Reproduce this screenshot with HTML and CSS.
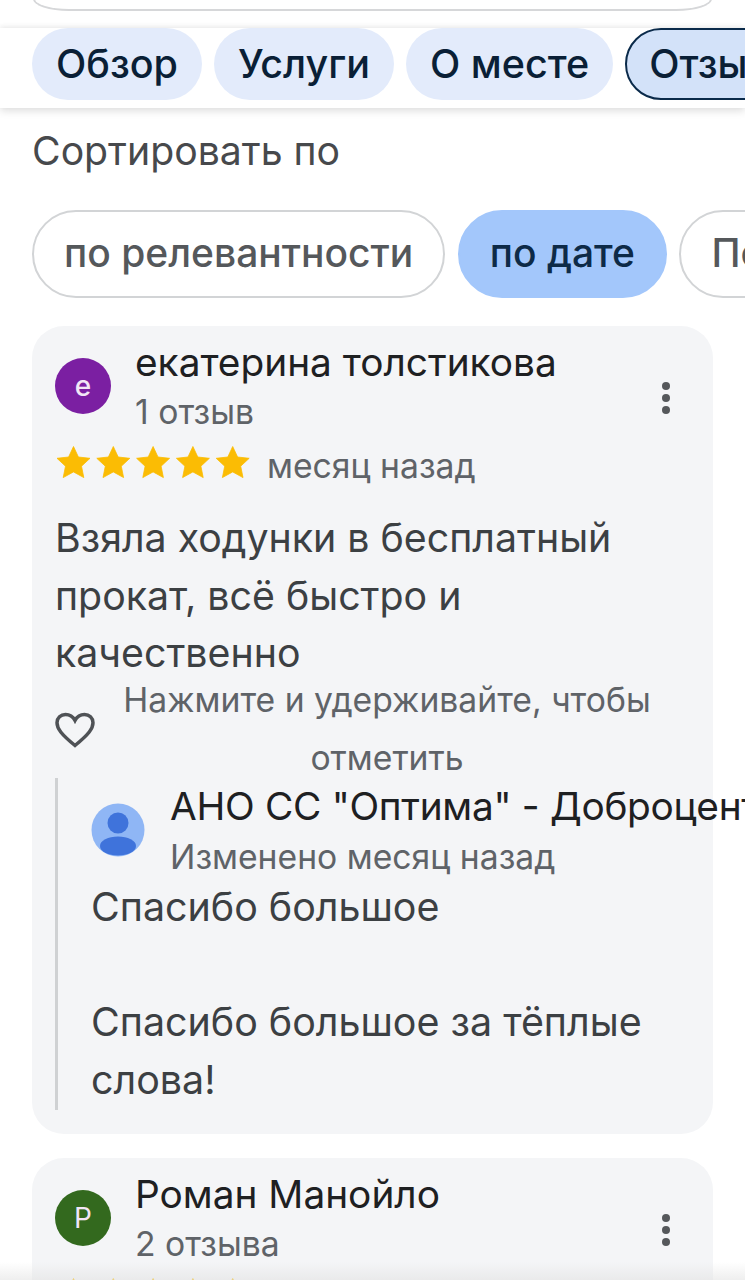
FILE: index.html
```html
<!DOCTYPE html>
<html lang="ru">
<head>
<meta charset="utf-8">
<title>Отзывы</title>
<link rel="stylesheet" href="styles.css">
</head>
<body>
<div class="page">
  <div class="search-area"><div class="search-box"></div></div>
  <nav class="tabs">
    <span class="tab">Обзор</span>
    <span class="tab">Услуги</span>
    <span class="tab">О месте</span>
    <span class="tab tab-active">Отзывы</span>
  </nav>
  <main class="content">
    <div class="sort-label">Сортировать по</div>
    <div class="sort-row">
      <span class="sort-chip">по релевантности</span>
      <span class="sort-chip sort-chip-active">по дате</span>
      <span class="sort-chip">Положительные</span>
    </div>
    <article class="card">
      <header class="head">
        <div class="avatar avatar-purple">е</div>
        <div class="who">
          <div class="name">екатерина толстикова</div>
          <div class="sub">1 отзыв</div>
        </div>
        <svg class="more" viewBox="0 0 12 44"><circle cx="6" cy="6" r="4"/><circle cx="6" cy="18" r="4"/><circle cx="6" cy="30" r="4"/></svg>
      </header>
      <div class="rating">
        <svg class="stars" viewBox="0 0 193 33">
          <path d="M16.500 .5l4.900 10.500 11.600 1.300-8.500 7.900 2.300 11.400-10.300-5.700-10.300 5.700 2.300-11.400-8.500-7.900 11.600-1.300z"/>
          <path d="M56.300 .5l4.900 10.500 11.600 1.300-8.500 7.900 2.300 11.400-10.300-5.700-10.300 5.700 2.300-11.400-8.500-7.900 11.600-1.300z"/>
          <path d="M96.100 .5l4.900 10.500 11.600 1.300-8.500 7.900 2.300 11.400-10.300-5.700-10.300 5.700 2.300-11.400-8.500-7.900 11.600-1.300z"/>
          <path d="M135.900 .5l4.900 10.500 11.600 1.300-8.500 7.900 2.300 11.400-10.300-5.700-10.300 5.700 2.300-11.400-8.500-7.900 11.600-1.300z"/>
          <path d="M175.700 .5l4.900 10.500 11.600 1.300-8.500 7.900 2.300 11.400-10.300-5.700-10.300 5.700 2.300-11.400-8.500-7.900 11.600-1.300z"/>
        </svg>
        <span class="date">месяц назад</span>
      </div>
      <p class="text">Взяла ходунки в бесплатный прокат, всё быстро и качественно</p>
      <div class="like-row">
        <svg class="heart" viewBox="0 0 40 36"><path d="M20 33.500 C6 22 2 16.500 2 10.800 C2 6 5.800 2.500 10.500 2.500 C14.500 2.500 18 4.700 20 8.500 C22 4.700 25.500 2.500 29.500 2.500 C34.200 2.500 38 6 38 10.800 C38 16.500 34 22 20 33.500 Z"/></svg>
        <div class="like-hint">Нажмите и удерживайте, чтобы отметить</div>
      </div>
      <section class="reply">
        <div class="reply-head">
          <svg class="owner" viewBox="0 0 54 54"><circle cx="27" cy="27" r="26.500" fill="#8fb6f5"/><circle cx="27" cy="20" r="10.500" fill="#3f73db"/><ellipse cx="27" cy="43" rx="18" ry="9.500" fill="#3f73db"/></svg>
          <div class="who">
            <div class="name owner-name">АНО СС "Оптима" - Доброцентр</div>
            <div class="sub owner-sub">Изменено месяц назад</div>
          </div>
        </div>
        <p class="reply-text">Спасибо большое<br><br>Спасибо большое за тёплые слова!</p>
      </section>
    </article>
    <article class="card">
      <header class="head">
        <div class="avatar avatar-green">Р</div>
        <div class="who">
          <div class="name">Роман Манойло</div>
          <div class="sub">2 отзыва</div>
        </div>
        <svg class="more" viewBox="0 0 12 44"><circle cx="6" cy="6" r="4"/><circle cx="6" cy="18" r="4"/><circle cx="6" cy="30" r="4"/></svg>
      </header>
      <div class="rating">
        <svg class="stars" viewBox="0 0 193 33">
          <path d="M16.500 .5l4.900 10.500 11.600 1.300-8.500 7.900 2.300 11.400-10.300-5.700-10.300 5.700 2.300-11.400-8.500-7.900 11.600-1.300z"/>
          <path d="M56.300 .5l4.900 10.500 11.600 1.300-8.500 7.900 2.300 11.400-10.300-5.700-10.300 5.700 2.300-11.400-8.500-7.900 11.600-1.300z"/>
          <path d="M96.100 .5l4.900 10.500 11.600 1.300-8.500 7.900 2.300 11.400-10.300-5.700-10.300 5.700 2.300-11.400-8.500-7.900 11.600-1.300z"/>
          <path d="M135.900 .5l4.900 10.500 11.600 1.300-8.500 7.900 2.300 11.400-10.300-5.700-10.300 5.700 2.300-11.400-8.500-7.900 11.600-1.300z"/>
          <path d="M175.700 .5l4.900 10.500 11.600 1.300-8.500 7.900 2.300 11.400-10.300-5.700-10.300 5.700 2.300-11.400-8.500-7.900 11.600-1.300z"/>
        </svg>
      </div>
    </article>
  </main>
  <div class="bottom-fade"></div>
</div>
</body>
</html>
```
FILE: styles.css
```css
* { box-sizing: border-box; }
html, body { margin: 0; padding: 0; background: #fff; }
body { font-family: Inter, "Noto Sans", sans-serif; }
.page { position: relative; width: 745px; height: 1280px; overflow: hidden; background: #fff; }

.search-area { height: 28px; padding: 0 33px 0 33px; overflow: hidden; }
.search-box { height: 12px; margin-top: -1px; border: 2px solid #d6d7d9; border-top: 0; border-radius: 0 0 36px 36px / 0 0 12px 12px; }

.tabs { position: relative; z-index: 2; display: flex; gap: 12px; height: 80px; padding: 0 0 8px 32px; background: #fff; box-shadow: 0 3px 8px rgba(0,0,0,.13), 0 -2px 5px rgba(0,0,0,.05); overflow: hidden; }
.tab { flex: none; display: flex; align-items: center; height: 72px; padding: 0 24px 1px; border-radius: 36px; background: #e3ebfb; color: #0a1f36; font-size: 39.500px; font-weight: 500; }
.tab-active { background: #d3e2f9; border: 2px solid #0a2a4a; padding: 0 22px 1px; }

.content { padding: 0 32px; }
.sort-label { margin-top: 20px; height: 48px; line-height: 46px; font-size: 39.200px; color: #47494c; }
.sort-row { display: flex; gap: 12.500px; margin-top: 34px; margin-right: -32px; }
.sort-chip { flex: none; display: flex; align-items: center; height: 88px; padding: 0 30px 3px; border: 2px solid #d2d4d6; border-radius: 44px; color: #55585b; font-size: 39px; font-weight: 500; }
.sort-chip-active { background: #a3c7fb; border-color: #a3c7fb; color: #0d2a47; }

.card { margin-top: 28px; padding: 12px 23px 24px; width: 681px; border-radius: 32px; background: #f4f5f7; }
.card + .card { margin-top: 24px; height: 200px; }

.head { display: flex; align-items: center; gap: 24px; position: relative; }
.avatar { flex: none; display: flex; align-items: center; justify-content: center; width: 56px; height: 56px; margin-top: -2px; border-radius: 50%; color: #f2e6f6; font-size: 28px; font-weight: 500; }
.avatar-purple { background: #7b1fa2; }
.avatar-green { background: #33691e; font-weight: 400; }
.who { min-width: 0; }
.name { height: 50px; line-height: 47px; font-size: 38.800px; color: #1e2022; white-space: nowrap; }
.sub { height: 48px; line-height: 48px; font-size: 33.700px; color: #5f6368; white-space: nowrap; }
.more { position: absolute; right: 18px; top: 42px; width: 12px; height: 44px; fill: #55585b; }

.rating { display: flex; align-items: center; gap: 17px; height: 48px; margin-top: 5px; }
.stars { width: 193px; height: 33px; margin-top: -5px; margin-left: 2px; fill: #fbbc04; stroke: #fbbc04; stroke-width: .8; stroke-linejoin: round; overflow: visible; }
.date { font-size: 33.700px; color: #5f6368; }

.text { margin: 20px 0 0; width: 590px; font-size: 39.300px; line-height: 57.500px; color: #3c4043; }

.like-row { display: flex; align-items: center; height: 116px; margin-top: -9.500px; }
.heart { flex: none; width: 40px; height: 36px; fill: none; stroke: #4f5256; stroke-width: 3.500; }
.like-hint { width: 584px; margin-top: -2px; text-align: center; font-size: 33.700px; line-height: 58px; color: #5f6368; }

.reply { margin: -10px 0 0; padding: 0 0 0 33px; border-left: 3px solid #cfd1d3; height: 332px; }
.reply-head { display: flex; align-items: center; gap: 25px; }
.owner { flex: none; width: 54px; height: 54px; }
.owner-name { margin-top: 4px; letter-spacing: -.3px; }
.owner-sub { margin-top: 1px; }
.reply-text { margin: -2px 0 0; width: 580px; font-size: 39.400px; line-height: 57.500px; color: #3c4043; }

.bottom-fade { position: absolute; left: 0; right: 0; bottom: 0; height: 18px; background: linear-gradient(rgba(255,255,255,0), rgba(225,225,225,.55)); }
```
